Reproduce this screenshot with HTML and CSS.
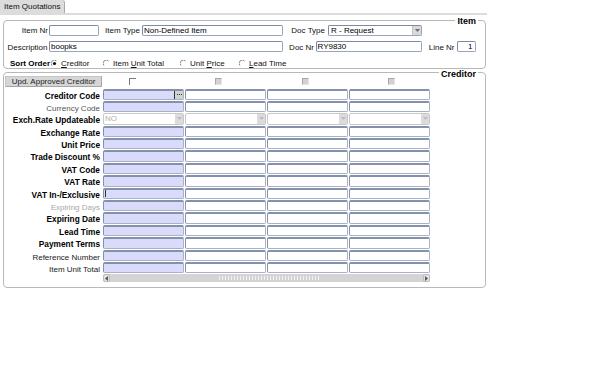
FILE: index.html
```html
<!DOCTYPE html>
<html>
<head>
<meta charset="utf-8">
<title>Item Quotations</title>
<link rel="stylesheet" href="styles.css">
</head>
<body>
<div class="page">
  <div class="tabs"><div class="tab">Item Quotations</div></div>
  <div class="tabline"></div>

  <div class="frame item-frame">
    <span class="legend legend-item">Item</span>
    <div class="frow row1">
      <span class="flbl w-itemnr">Item Nr</span><span class="tf w-itemnr-in"></span>
      <span class="flbl w-itemtype">Item Type</span><span class="tf w-itemtype-in">Non-Defined Item</span>
      <span class="flbl w-doctype">Doc Type</span><span class="tf sel w-doctype-in"><span class="seltext">R - Request</span><span class="ddbtn"><svg width="5" height="3" viewBox="0 0 5 3"><path d="M0 0H5L2.5 3Z" fill="#707070"/></svg></span></span>
    </div>
    <div class="frow row2">
      <span class="flbl w-desc">Description</span><span class="tf w-desc-in">boopks</span>
      <span class="flbl w-docnr">Doc Nr</span><span class="tf w-docnr-in">RY9830</span>
      <span class="flbl w-linenr">Line Nr</span><span class="tf num w-linenr-in">1</span>
    </div>
    <div class="frow row3">
      <span class="sort-lbl">Sort Order</span>
      <span class="radio w-r1"><svg class="rb" width="7" height="7" viewBox="0 0 7 7"><path d="M1 5.5A3 3 0 0 1 5.5 1" fill="none" stroke="#8a8a8a" stroke-width="1"/><circle cx="3.5" cy="3.5" r="1.6" fill="#111"/></svg><span><u>C</u>reditor</span></span>
      <span class="radio w-r2"><svg class="rb" width="7" height="7" viewBox="0 0 7 7"><path d="M1 5.5A3 3 0 0 1 5.5 1" fill="none" stroke="#8a8a8a" stroke-width="1"/></svg><span>Item <u>U</u>nit Total</span></span>
      <span class="radio w-r3"><svg class="rb" width="7" height="7" viewBox="0 0 7 7"><path d="M1 5.5A3 3 0 0 1 5.5 1" fill="none" stroke="#8a8a8a" stroke-width="1"/></svg><span>Unit <u>P</u>rice</span></span>
      <span class="radio"><svg class="rb" width="7" height="7" viewBox="0 0 7 7"><path d="M1 5.5A3 3 0 0 1 5.5 1" fill="none" stroke="#8a8a8a" stroke-width="1"/></svg><span><u>L</u>ead Time</span></span>
    </div>
  </div>

  <div class="frame cred-frame">
    <span class="legend legend-cred">Creditor</span>
    <div class="btnrow">
      <span class="btn">Upd. Approved Creditor</span>
      <span class="cb cb-on"></span>
      <span class="cb cb-off"></span>
      <span class="cb cb-off"></span>
      <span class="cb cb-off"></span>
    </div>
    <div class="grid">
      <span class="lbl b">Creditor Code</span>
      <span class="c c1 lovcell"><span class="lov"><svg width="5" height="1" viewBox="0 0 5 1"><rect x="0" width="1" height="1" fill="#333"/><rect x="2" width="1" height="1" fill="#333"/><rect x="4" width="1" height="1" fill="#333"/></svg></span></span>
      <span class="c"></span><span class="c"></span><span class="c"></span>

      <span class="lbl g">Currency Code</span>
      <span class="c c1"></span><span class="c"></span><span class="c"></span><span class="c"></span>

      <span class="lbl b">Exch.Rate Updateable</span>
      <span class="c dis"><span class="distext">NO</span><span class="disbtn"><svg width="5" height="3" viewBox="0 0 5 3"><path d="M0 0H5L2.5 3Z" fill="#bcbcbc"/></svg></span></span>
      <span class="c dis"><span class="distext"></span><span class="disbtn"><svg width="5" height="3" viewBox="0 0 5 3"><path d="M0 0H5L2.5 3Z" fill="#bcbcbc"/></svg></span></span>
      <span class="c dis"><span class="distext"></span><span class="disbtn"><svg width="5" height="3" viewBox="0 0 5 3"><path d="M0 0H5L2.5 3Z" fill="#bcbcbc"/></svg></span></span>
      <span class="c dis"><span class="distext"></span><span class="disbtn"><svg width="5" height="3" viewBox="0 0 5 3"><path d="M0 0H5L2.5 3Z" fill="#bcbcbc"/></svg></span></span>

      <span class="lbl b">Exchange Rate</span>
      <span class="c c1"></span><span class="c"></span><span class="c"></span><span class="c"></span>

      <span class="lbl b">Unit Price</span>
      <span class="c c1"></span><span class="c"></span><span class="c"></span><span class="c"></span>

      <span class="lbl b">Trade Discount %</span>
      <span class="c c1"></span><span class="c"></span><span class="c"></span><span class="c"></span>

      <span class="lbl b">VAT Code</span>
      <span class="c c1"></span><span class="c"></span><span class="c"></span><span class="c"></span>

      <span class="lbl b">VAT Rate</span>
      <span class="c c1"></span><span class="c"></span><span class="c"></span><span class="c"></span>

      <span class="lbl b">VAT In-/Exclusive</span>
      <span class="c c1"><span class="caret"></span></span><span class="c"></span><span class="c"></span><span class="c"></span>

      <span class="lbl lg">Expiring Days</span>
      <span class="c c1"></span><span class="c"></span><span class="c"></span><span class="c"></span>

      <span class="lbl b">Expiring Date</span>
      <span class="c c1"></span><span class="c"></span><span class="c"></span><span class="c"></span>

      <span class="lbl b">Lead Time</span>
      <span class="c c1"></span><span class="c"></span><span class="c"></span><span class="c"></span>

      <span class="lbl b">Payment Terms</span>
      <span class="c c1"></span><span class="c"></span><span class="c"></span><span class="c"></span>

      <span class="lbl">Reference Number</span>
      <span class="c c1"></span><span class="c"></span><span class="c"></span><span class="c"></span>

      <span class="lbl">Item Unit Total</span>
      <span class="c c1"></span><span class="c"></span><span class="c"></span><span class="c"></span>

      <div class="hscroll">
        <span class="sbtn"><svg width="3" height="5" viewBox="0 0 3 5"><path d="M3 0V5L0 2.5Z" fill="#555"/></svg></span>
        <span class="strack"><span class="grip"></span></span>
        <span class="sbtn"><svg width="3" height="5" viewBox="0 0 3 5"><path d="M0 0V5L3 2.5Z" fill="#555"/></svg></span>
      </div>
    </div>
  </div>
</div>
</body>
</html>
```
FILE: styles.css
```css
html, body {
  margin: 0;
  padding: 0;
  background: #ffffff;
}
body {
  font-family: "Liberation Sans", Arial, sans-serif;
  font-size: 8px;
  color: #000;
}
.page {
  width: 488px;
}
.tabs {
  display: flex;
  height: 13px;
}
.tab {
  box-sizing: border-box;
  height: 13px;
  padding: 1px 4px 0 4px;
  line-height: 12px;
  background: #dcdcdc;
  border-right: 1px solid #a8a8a8;
  border-top-right-radius: 3px;
  color: #111;
  white-space: nowrap;
}
.tabline {
  width: 487px;
  height: 2px;
  background: #dcdcdc;
}
.frame {
  position: relative;
  box-sizing: border-box;
  margin-left: 3px;
  width: 483px;
  border: 1px solid #b8b8b8;
  border-radius: 4px;
}
.legend {
  position: absolute;
  right: 7px;
  font-size: 9px;
  font-weight: bold;
  line-height: 11px;
  padding: 0 2px;
  background: #fff;
  color: #000;
}
.legend-item { top: -5px; }
.legend-cred { top: -4px; }

.item-frame {
  margin-top: 5px;
  height: 49px;
  padding-top: 3.5px;
}
.frow {
  display: flex;
  align-items: center;
}
.row1 { height: 11px; }
.row2 { height: 11px; margin-top: 5.5px; }
.row3 { height: 10px; margin-top: 6px; }

.flbl {
  box-sizing: border-box;
  text-align: right;
  white-space: nowrap;
  line-height: 11px;
  padding-top: 1px;
  color: #111;
}
.w-itemnr { width: 45px; padding-right: 1px; }
.w-itemtype { width: 43.5px; padding-right: 2px; }
.w-doctype { width: 45.5px; padding-right: 3px; }
.w-desc { width: 45px; padding-right: 1.5px; }
.w-docnr { width: 33px; padding-right: 1.5px; }
.w-linenr { width: 35px; padding-right: 2.5px; }

.tf {
  box-sizing: border-box;
  height: 11px;
  border: 1px solid #9aa6bb;
  border-top-color: #7d8aa3;
  border-left-color: #7d8aa3;
  border-radius: 2px;
  background: #fff;
  padding: 0 1px;
  line-height: 9px;
  white-space: nowrap;
  overflow: hidden;
}
.w-itemnr-in { width: 49.5px; }
.w-itemtype-in { width: 140.5px; }
.w-doctype-in { width: 94px; }
.w-desc-in { width: 233.5px; }
.w-docnr-in { width: 106.5px; }
.w-linenr-in { width: 18.5px; }
.num { text-align: right; padding-right: 2px; }

.sel {
  display: flex;
  padding-right: 0;
}
.seltext {
  flex: 1;
  padding-left: 1px;
}
.ddbtn {
  width: 8px;
  height: 9px;
  background: #d8d8d8;
  border-left: 1px solid #c4c4c4;
  display: flex;
  align-items: center;
  justify-content: center;
}

.sort-lbl {
  box-sizing: border-box;
  width: 47px;
  padding-left: 6px;
  font-weight: bold;
  white-space: nowrap;
}
.radio {
  display: flex;
  align-items: center;
  white-space: nowrap;
  color: #111;
}
.rb {
  margin-right: 3px;
  flex: none;
}
.w-r1 { width: 52px; }
.w-r2 { width: 77px; }
.w-r3 { width: 59px; }

.cred-frame {
  margin-top: 3px;
  height: 216px;
  padding-top: 3px;
}
.btnrow {
  display: flex;
  align-items: center;
  height: 10.5px;
}
.btn {
  box-sizing: border-box;
  margin-left: 1px;
  width: 97px;
  height: 10.5px;
  line-height: 9px;
  text-align: center;
  background: #d6d6d6;
  border: 1px solid #c6c6c6;
  border-right-color: #a6a6a6;
  border-bottom-color: #a6a6a6;
  color: #222;
  white-space: nowrap;
}
.cb {
  box-sizing: border-box;
  width: 7px;
  height: 7px;
}
.cb-on {
  margin-left: 26.5px;
  border-top: 1px solid #7a7a7a;
  border-left: 1px solid #7a7a7a;
  background: #fff;
}
.cb-off {
  margin-left: 79.5px;
  background: #d2d2d2;
  border: 1px solid #a8a8a8;
  border-right-color: #e4e4e4;
  border-bottom-color: #e4e4e4;
}

.grid {
  display: grid;
  grid-template-columns: 98px 81px 81px 81px 81px;
  grid-auto-rows: 11.4px;
  column-gap: 1px;
  row-gap: 1px;
  margin-top: 2px;
}
.lbl {
  box-sizing: border-box;
  padding-right: 2px;
  padding-top: 2px;
  text-align: right;
  white-space: nowrap;
  line-height: 11px;
  font-size: 8px;
  color: #1a1a1a;
}
.lbl.b {
  font-weight: bold;
  font-size: 8.3px;
  color: #000;
}
.lbl.g { color: #555; }
.lbl.lg { color: #a8a8a8; }

.c {
  box-sizing: border-box;
  height: 11.4px;
  border: 1px solid #a9b2c4;
  border-top: 2px solid #8391aa;
  border-left-color: #8391aa;
  border-radius: 2px;
  background: #fff;
}
.c1 { background: #dadafa; }
.lovcell {
  display: flex;
  justify-content: flex-end;
}
.lov {
  width: 8px;
  height: 100%;
  border-left: 1px solid #333;
  background: #d2d2d2;
  display: flex;
  align-items: center;
  justify-content: center;
}
.caret {
  display: block;
  width: 1px;
  height: 7px;
  margin-left: 1px;
  background: #333;
}
.dis {
  display: flex;
  border: 1px solid #c8c8c8;
  background: #fff;
}
.distext {
  flex: 1;
  color: #b0b0b0;
  line-height: 9px;
  padding-left: 1px;
}
.disbtn {
  width: 8px;
  background: #dcdcdc;
  display: flex;
  align-items: center;
  justify-content: center;
}

.hscroll {
  grid-column: 2 / 6;
  display: flex;
  height: 8px;
  margin-top: 0;
  background: #d4d4d4;
  border-radius: 2px;
}
.sbtn {
  box-sizing: border-box;
  width: 7px;
  height: 8px;
  background: #e2e2e2;
  border: 1px solid #bcbcbc;
  border-radius: 2px;
  display: flex;
  align-items: center;
  justify-content: center;
}
.strack {
  flex: 1;
  display: flex;
  align-items: center;
  justify-content: center;
}
.grip {
  width: 103px;
  height: 4px;
  margin-left: 6px;
  background-image: radial-gradient(circle, #f2f2f2 0.7px, transparent 1px);
  background-size: 3px 2px;
}
```
